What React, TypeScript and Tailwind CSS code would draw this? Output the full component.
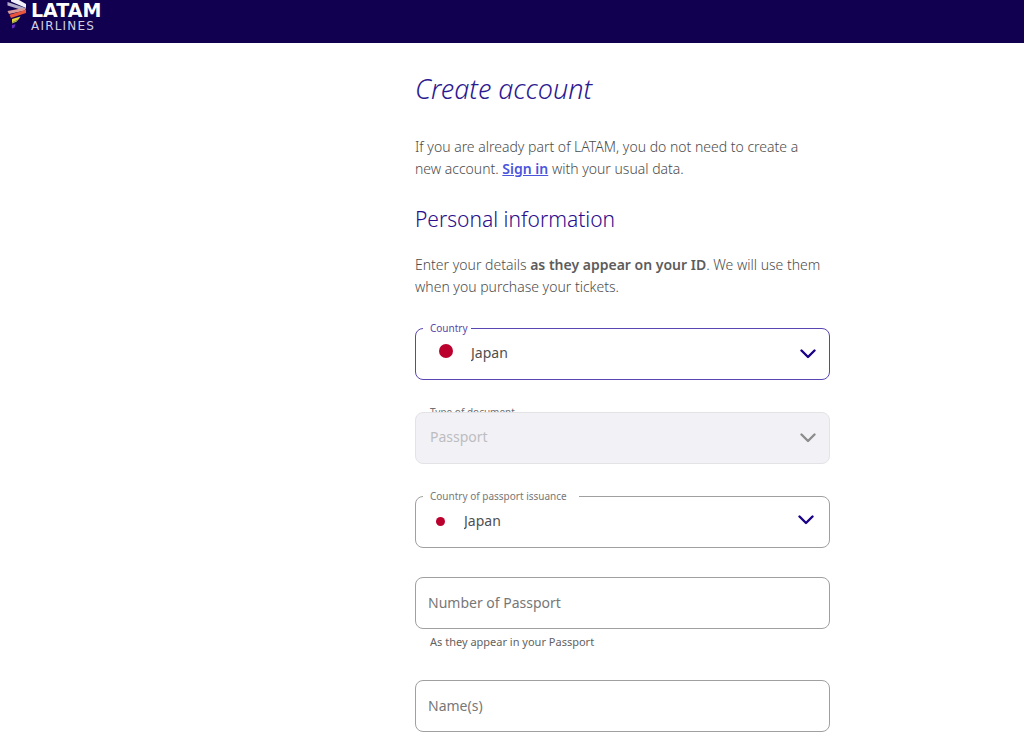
import { useState } from 'react';
import type { ReactNode } from 'react';

function Logo() {
	return (
		<a href="#" aria-label="LATAM Airlines" className="flex items-start gap-px">
			<svg className="h-8 w-6" viewBox="0 0 24 32" fill="none">
				<path d="M5 0H13L20 4V8L5 1.5Z" fill="#f1eff7" />
				<path d="M1.5 2L19.5 8L16 10L1.5 5.5Z" fill="#b3acc9" />
				<path d="M1.5 11L15 8.5L20 8L19 10.5L3 14Z" fill="#d99a98" />
				<path d="M3.5 14.8L20 9.8V13L5 18Z" fill="#e8543c" />
				<path d="M6 19L14.5 16.5L12.5 19.5L6 22.5Z" fill="#e3d23a" />
				<path d="M6 22.5L12.5 19.5L10.5 21.8L6 23.5Z" fill="#b7c43a" />
				<path d="M6 25L9.5 24.2L8.5 27.5L6 28.5Z" fill="#6a2bc4" />
			</svg>
			<span className="flex flex-col font-['DejaVu_Sans'] text-white">
				<span className="text-[19px] leading-5 font-bold">LATAM</span>
				<span className="text-xs leading-3 tracking-widest text-[#d4d0e4]">AIRLINES</span>
			</span>
		</a>
	);
}

function Chevron({ className }: { className: string }) {
	return (
		<svg
			className={`pointer-events-none absolute h-4 w-4 ${className}`}
			viewBox="0 0 16 16"
			fill="none"
			stroke="currentColor"
			aria-hidden="true"
		>
			<path strokeWidth={2.4} strokeLinecap="round" strokeLinejoin="round" d="M1.5 4.5L8 11L14.5 4.5" />
		</svg>
	);
}

function SelectField({
	id,
	label,
	options,
	labelClass,
	selectClass,
	disabled,
	children,
}: {
	id: string;
	label: string;
	options: string[];
	labelClass: string;
	selectClass: string;
	disabled?: boolean;
	children?: ReactNode;
}) {
	const [value, setValue] = useState(options[0]);

	return (
		<div className="relative">
			<select
				id={id}
				value={value}
				disabled={disabled}
				onChange={(e) => setValue(e.target.value)}
				className={`block h-[52px] w-full appearance-none rounded-lg border pr-10 pb-[2px] text-sm opacity-100 outline-none ${selectClass}`}
			>
				{options.map((o) => (
					<option key={o} value={o}>{o}</option>
				))}
			</select>
			<label htmlFor={id} className={`absolute left-2 pl-[7px] text-[10px] leading-4 ${labelClass}`}>
				{label}
			</label>
			{children}
		</div>
	);
}

function TextField({ id, label, hint }: { id: string; label: string; hint?: string }) {
	return (
		<div>
			<input
				id={id}
				type="text"
				placeholder={label}
				aria-label={label}
				className="block h-[52px] w-full rounded-lg border border-[#a0a0a0] px-3 pb-[2px] text-sm text-[#626262] outline-none placeholder:text-[#777777] focus:border-[#1b0088]"
			/>
			{hint && <p className="mt-[3px] mb-px pl-[15px] text-[11px] leading-5 text-[#626262]">{hint}</p>}
		</div>
	);
}

export default function App() {
	return (
		<div className="min-h-screen bg-white font-['Noto_Sans',sans-serif] text-[#4c4c4c]">
			<header className="h-[43px] bg-[#10004f] px-[6px]">
				<Logo />
			</header>

			<main className="pt-7 pl-[415px]">
				<form className="w-full max-w-[415px] pb-10">
					<h1 className="text-[27px] leading-9 font-light text-[#2d1a91] italic">Create account</h1>

					<p className="mt-[29px] pr-2 text-sm leading-[22px] font-light">
						If you are already part of LATAM, you do not need to create a new account.{' '}
						<a href="#" className="font-semibold text-[#4a55dc] underline">Sign in</a> with your usual data.
					</p>

					<h2 className="mt-[23px] text-[21px] leading-8 font-light text-[#2a0e8c]">Personal information</h2>

					<p className="mt-[19px] pr-2 text-sm leading-[22px] font-light">
						Enter your details <strong className="font-semibold text-[#5c5c5c]">as they appear on your ID</strong>. We will use them when you purchase your tickets.
					</p>

					<div className="mt-[30px] flex flex-col gap-8">
						<SelectField
							id="country"
							label="Country"
							options={['Japan', 'Brazil', 'Chile', 'Peru']}
							labelClass="-top-2 bg-white pr-[3px] text-[#5a45a8]"
							selectClass="border-[#5a45b5] pl-[55px] text-[#4f4f4f]"
						>
							<span className="absolute top-4 left-6 h-[14px] w-[14px] rounded-full bg-[#bc002d]" />
							<Chevron className="top-[18px] right-[14px] text-[#1b0088]" />
						</SelectField>
						<SelectField
							id="document"
							label="Type of document"
							options={['Passport']}
							labelClass="-top-2 h-2 overflow-hidden bg-white pr-[3px] text-[#707070]"
							selectClass="border-[#e3e3e6] bg-[#f2f1f6] pl-[14px] text-[#bdbdc0]"
							disabled
						>
							<Chevron className="top-[18px] right-[14px] text-[#8c8c8c]" />
						</SelectField>
						<SelectField
							id="issuance"
							label="Country of passport issuance"
							options={['Japan', 'Brazil', 'Chile', 'Peru']}
							labelClass="-top-2 bg-white pr-3 text-[#777777]"
							selectClass="border-[#a0a0a0] pl-12 text-[#4f4f4f]"
						>
							<span className="absolute top-[21px] left-[21px] h-[9px] w-[9px] rounded-full bg-[#bc002d]" />
							<Chevron className="top-4 right-4 text-[#1b0088]" />
						</SelectField>
					</div>

					<div className="mt-[29px] flex flex-col gap-[27px]">
						<TextField id="passport" label="Number of Passport" hint="As they appear in your Passport" />
						<TextField id="name" label="Name(s)" />
					</div>
				</form>
			</main>
		</div>
	);
}
